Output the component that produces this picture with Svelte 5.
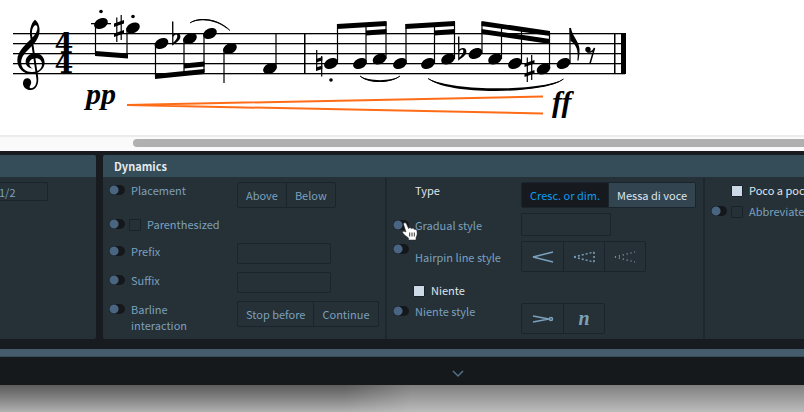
<script>
  const staffLines = [33, 43, 53, 63, 73];

  // head centre x, y; stem x and the y where the stem ends
  const notes = [
    { x: 101, y: 23.5, stem: 95.5, end: 54 },
    { x: 133, y: 28, stem: 127, end: 57 },
    { x: 161.5, y: 43.5, stem: 155.5, end: 77 },
    { x: 190, y: 38.5, stem: 184, end: 74 },
    { x: 210, y: 33.5, stem: 204, end: 72 },
    { x: 230, y: 48.5, stem: 224, end: 83 },
    { x: 270, y: 68.5, stem: 276, end: 33 },
    { x: 331, y: 63.5, stem: 337.5, end: 24 },
    { x: 360, y: 63.5, stem: 366, end: 24 },
    { x: 379.5, y: 59, stem: 386, end: 22 },
    { x: 400, y: 63.5, stem: 406, end: 24 },
    { x: 428, y: 63.5, stem: 434.5, end: 24 },
    { x: 448, y: 59, stem: 454.5, end: 22 },
    { x: 475.5, y: 53.5, stem: 482, end: 22 },
    { x: 495, y: 59, stem: 501.5, end: 25 },
    { x: 515, y: 63.5, stem: 521.5, end: 28 },
    { x: 543.5, y: 69, stem: 549.5, end: 32 },
    { x: 563.5, y: 63.5, stem: 570, end: 28 }
  ];

  // x1, y1, x2, y2 of the upper edge
  const beams = [
    [95, 51, 128, 53.5],
    [155, 74, 204.5, 69],
    [184, 63.5, 204.5, 61.5],
    [337, 24, 386.5, 21],
    [366, 30.5, 386.5, 29],
    [405.5, 24, 455, 21],
    [434, 30.5, 455, 29],
    [481.5, 21, 550, 31],
    [481.5, 29, 550, 39]
  ];

  const dots = [[101, 11.5], [133, 16.5], [331, 80]];
  const sharps = [[114, 15], [524.5, 55]];
  const flats = [[172, 21.5], [458, 36.5]];

  let type = $state('Cresc. or dim.');
</script>

{#snippet toggle(label)}
  <input class="toggle" type="checkbox" role="switch" aria-label={label} />
{/snippet}

<main>
  <section class="score" aria-label="Score">
    <svg width="804" height="134" viewBox="0 0 804 134">
      {#each staffLines as y}
        <rect x="13" {y} width="612" height="1.3" />
      {/each}
      <g transform="scale(.3333)">
        <path d="M105 59C115 66 121 82 118 99C114 123 95 139 81 153C68 166 62 178 64 192C66 207 80 217 97 216C116 215 127 204 126 191C125 179 115 174 105 175C93 176 87 185 88 192C89 200 94 203 99 206C86 205 76 197 77 184C78 170 90 160 106 160C124 160 134 174 134 189C133 208 114 222 95 222C69 222 52 204 52 180C53 156 70 141 86 124C99 112 110 100 112 88C113 80 111 75 106 76C98 80 95 92 96 104L114 228C118 252 108 270 92 270C78 270 68 260 69 248C70 238 77 234 84 235C95 238 96 250 90 258C88 260 89 264 92 265C104 265 112 250 109 234L91 112C88 92 92 70 105 59Z" />
      </g>
      <text class="meter" x="64" y="53" text-anchor="middle">4</text>
      <text class="meter" x="64" y="73" text-anchor="middle">4</text>

      <rect x="91" y="23" width="20" height="1.3" />
      {#each notes as n}
        <ellipse cx={n.x} cy={n.y} rx="7.2" ry="5" transform="rotate(-26 {n.x} {n.y})" />
        <path class="stem" d="M{n.stem} {n.y}V{n.end}" />
      {/each}
      {#each beams as [x1, y1, x2, y2]}
        <path d="M{x1} {y1}L{x2} {y2}V{y2 + 4.9}L{x1} {y1 + 4.9}Z" />
      {/each}
      {#each dots as [cx, cy]}
        <circle {cx} {cy} r="1.8" />
      {/each}
      {#each sharps as [x, y]}
        <g transform="translate({x} {y})">
          <path class="stem" d="M2.8 2.5V27M7.2 0V25" />
          <path d="M0 8.5L10 5V8.5L0 12ZM0 18.5L10 15V18.5L0 22Z" />
        </g>
      {/each}
      {#each flats as [x, y]}
        <path transform="translate({x} {y})" fill-rule="evenodd" d="M0 0H1.400V13C4 10.500 8.400 11 8.400 15C8.400 19 4 21 .2 24.200ZM1.400 15.500V21C4 18.500 5.500 16.500 5.300 14.300C5 12 2 13.300 1.400 15.500Z" />
      {/each}
      <path class="stem" d="M316.700 50V70.500M321.700 56V76.500" />
      <path d="M316 59L322.300 57V60.500L316 62.500ZM316 67.500L322.300 65.500V69L316 71Z" />

      <path d="M190 23C196 17 217 16 230 31C217 19 199 18 190 23Z" />
      <path d="M360 76C367 84 391 84 400 76C392 81.500 368 81.500 360 76Z" />
      <path d="M428 78.500C447 96 548 94 563.500 79C544 91 455 92 428 78.500Z" />
      <path class="stroke" d="M190 23C197 17.500 217 17.500 230 30.500M360 76C368 83 392 83 400 76M428 78.500C450 94 546 93 563.500 79" />

      <rect x="304" y="33" width="1.500" height="41" />
      <path d="M569.500 28H571C572 36 579 41 579.500 49C579.600 54 579 57 578.500 60.500H577.300C579 51 576 44 570.500 41Z" />
      <circle cx="588" cy="49.500" r="2.700" />
      <path class="rest" d="M587 51.500C590 53 593 51.500 594.500 48L590 63.500" />
      <rect x="614" y="33" width="1.500" height="41" />
      <rect x="621" y="33" width="5" height="41" />

      <path class="hairpin" d="M543 96.500L127 105L543 113.500" />
      <text class="dynamic" x="86" y="104">pp</text>
      <text class="dynamic" x="552" y="112">ff</text>
    </svg>
  </section>

  <div class="scrollbar"><div class="thumb"></div></div>

  <div class="panels">
    <section class="panel side">
      <h2></h2>
      <div class="body"><input class="field value" aria-label="Value" value="1/2" /></div>
    </section>

    <section class="panel">
      <h2>Dynamics</h2>
      <div class="body columns">
        <div class="column first">
          <div class="row">
            {@render toggle('Set placement')}
            <span class="label">Placement</span>
            <div class="segments"><button>Above</button><button>Below</button></div>
          </div>
          <div class="row">
            {@render toggle('Set parenthesized')}
            <label class="check"><input type="checkbox" />Parenthesized</label>
          </div>
          <div class="row">
            {@render toggle('Set prefix')}
            <label class="label" for="prefix">Prefix</label>
            <input class="field" id="prefix" />
          </div>
          <div class="row">
            {@render toggle('Set suffix')}
            <label class="label" for="suffix">Suffix</label>
            <input class="field" id="suffix" />
          </div>
          <div class="row">
            {@render toggle('Set barline interaction')}
            <span class="label">Barline<br />interaction</span>
            <div class="segments"><button>Stop before</button><button>Continue</button></div>
          </div>
        </div>

        <div class="column second">
          <div class="row on">
            <span class="blank"></span>
            <span class="label">Type</span>
            <div class="segments">
              {#each ['Cresc. or dim.', 'Messa di voce'] as option}
                <button class:selected={type === option} onclick={() => (type = option)}>{option}</button>
              {/each}
            </div>
          </div>
          <div class="row centered">
            <span class="pointed">
              {@render toggle('Set gradual style')}
              <svg class="cursor" width="16" height="19" viewBox="0 0 16 19">
                <path d="M1.500 2C1.500 .5 3.800 .3 4.500 2L6.500 6.500C7.500 5.500 9 5.700 9.500 6.700C10.500 6 12 6.300 12.300 7.500C13.600 7 15 8 15 9.500C15.500 12 14.800 14 14 15.500V18H6.500V16C4.500 14.500 2.500 13 .8 11C0 9.500 1.500 8.500 4 10Z" />
                <path class="knuckles" d="M7.700 10.500V14.500M10 10.500V14.500M12.300 10.500V14.500" />
              </svg>
            </span>
            <label class="label" for="gradual">Gradual style</label>
            <input class="field" id="gradual" />
          </div>
          <div class="row hairpins">
            {@render toggle('Set hairpin line style')}
            <span class="label">Hairpin line style</span>
            <div class="segments icons">
              <button aria-label="Solid"><svg width="22" height="12"><path d="M21 1L1 6L21 11" /></svg></button>
              <button aria-label="Dashed"><svg width="22" height="12"><path stroke-dasharray="2 2" d="M1 6L21 1M1 6L21 11M21 1V11" /></svg></button>
              <button aria-label="Dotted"><svg width="22" height="12"><path stroke-dasharray="1 3" d="M1 6L21 1M1 6L21 11" /></svg></button>
            </div>
          </div>
          <div class="row on niente">
            <label class="check"><input type="checkbox" />Niente</label>
          </div>
          <div class="row">
            {@render toggle('Set niente style')}
            <span class="label">Niente style</span>
            <div class="segments icons">
              <button aria-label="Circle"><svg width="22" height="10"><path d="M1 2L17 5L1 8" /><circle cx="19" cy="5" r="1.500" /></svg></button>
              <button class="letter">n</button>
            </div>
          </div>
        </div>

        <div class="column third">
          <div class="row on">
            <span class="blank"></span>
            <label class="check"><input type="checkbox" />Poco a poco</label>
          </div>
          <div class="row">
            {@render toggle('Set abbreviate')}
            <label class="check"><input type="checkbox" />Abbreviate</label>
          </div>
        </div>
      </div>
    </section>
  </div>

  <div class="bar"></div>
  <footer>
    <button aria-label="Hide panel"><svg width="12" height="8"><path d="M1 1L6 6L11 1" /></svg></button>
  </footer>
  <div class="shadow"></div>
</main>

<style>
  :global(body) {
    overflow: hidden;
    background: #fff;
  }
  main {
    display: flex;
    flex-direction: column;
    min-height: 100vh;
    overflow: hidden;
    font: 11px/16px "Noto Sans CJK SC", "Noto Sans", sans-serif;
    color: #7ba1bd;
  }
  main * {
    box-sizing: border-box;
  }
  button,
  input {
    margin: 0;
    font: inherit;
    color: inherit;
  }
  .score {
    height: 135px;
    overflow: hidden;
    background: #fff;
  }
  .score svg {
    display: block;
  }
  .stem,
  .stroke,
  .rest,
  .hairpin {
    fill: none;
    stroke: #000;
    stroke-width: 1.2px;
  }
  .stroke {
    stroke-width: 1px;
  }
  .rest {
    stroke-width: 1.5px;
  }
  .hairpin {
    stroke: #ff6c17;
    stroke-width: 2px;
  }
  .meter {
    font: bold 27px "DejaVu Serif", serif;
  }
  .dynamic {
    font: italic bold 30px "Liberation Serif", serif;
  }
  .scrollbar {
    height: 16px;
    padding: 2px 0 0 133px;
    border-top: 2px solid #ececec;
    background: #fafafa;
  }
  .thumb {
    height: 8px;
    border-radius: 4px 0 0 4px;
    background: #b0b0b0;
  }
  .panels {
    display: grid;
    grid-template-columns: 96px 1fr;
    gap: 7px;
    padding: 4px 0 10px;
    background: #181c20;
  }
  .panel {
    min-width: 0;
    display: flex;
    flex-direction: column;
    overflow: hidden;
    border-radius: 2px 0 0 2px;
    background: #263037;
  }
  .side {
    border-radius: 0 2px 2px 0;
  }
  h2 {
    height: 22px;
    margin: 0;
    padding-left: 11px;
    background: #354c59;
    font-size: 11px;
    line-height: 22px;
    font-weight: bold;
    color: #e4e9ed;
  }
  .body {
    flex: 1;
    padding-top: 1px;
  }
  .columns {
    display: grid;
    grid-template-columns: 284px 318px 1fr;
  }
  .column {
    display: grid;
    align-content: start;
    min-width: 0;
    padding: 4px 0 0 6px;
    border-right: 2px solid #1d272e;
    white-space: nowrap;
  }
  .first {
    grid-template-rows: 34px 27px 29px 29px 38px;
  }
  .second {
    grid-template-rows: 31px 28px 36px 26px 35px;
  }
  .third {
    grid-template-rows: 21px 21px;
    border: 0;
  }
  .row {
    display: flex;
    align-items: start;
    gap: 6px;
  }
  .on {
    color: #dfe6ec;
  }
  .centered {
    align-items: center;
    height: 23px;
  }
  .label {
    flex: none;
    width: 100px;
  }
  .blank {
    width: 16px;
  }
  .toggle {
    flex: none;
    display: block;
    appearance: none;
    width: 16px;
    height: 10px;
    margin-top: 3px;
    border-radius: 5px;
    background: radial-gradient(circle at 5px 5px, #4a6581 4px, #14181b 5px);
  }
  .centered .toggle {
    margin-top: 0;
  }
  .hairpins .label {
    padding-top: 8px;
  }
  .niente {
    padding: 5px 0 0 20px;
  }
  .check {
    display: flex;
    gap: 6px;
  }
  .row:not(.niente) > .check {
    margin-left: -2px;
  }
  .check input {
    appearance: none;
    width: 12px;
    height: 12px;
    margin-top: 3px;
    border: 1px solid #19212a;
    border-radius: 1px;
  }
  .on .check input {
    background: #ccd9e6;
  }
  .field {
    width: 94px;
    height: 21px;
    padding: 0 4px;
    border: 1px solid #1a242d;
    border-radius: 1px;
    background: none;
  }
  .second .field {
    width: 90px;
    height: 23px;
  }
  .value {
    display: block;
    width: 60px;
    height: 19px;
    margin: 4px 0 0 -12px;
    padding-left: 10px;
  }
  .segments {
    display: flex;
    height: 26px;
    border: 1px solid #1a242d;
    border-radius: 2px;
  }
  .segments button {
    display: grid;
    place-items: center;
    padding: 0 8px 1px;
    border: 0;
    background: none;
  }
  .segments button + button {
    border-left: 1px solid #1a242d;
  }
  .on .segments button {
    background: #324450;
  }
  .on .segments .selected {
    background: #16191d;
    color: #0a9cf5;
  }
  .icons {
    height: 31px;
  }
  .icons button {
    width: 41px;
    padding: 0;
  }
  .icons svg,
  footer svg {
    fill: none;
    stroke: #7ba1bd;
    stroke-width: 1.5px;
  }
  .segments .letter {
    font: italic bold 20px "Liberation Serif", serif;
  }
  .pointed {
    position: relative;
  }
  .cursor {
    position: absolute;
    left: 9px;
    top: 2px;
    fill: #fff;
    stroke: #20282e;
    stroke-width: 0.5px;
  }
  .knuckles {
    stroke: #333;
    stroke-width: 1px;
  }
  .bar {
    height: 8px;
    border-bottom: 1px solid #364d5b;
    background: #445c6c;
  }
  footer {
    height: 28px;
    padding-left: 111px;
    background: #15191b;
    text-align: center;
  }
  footer button {
    padding: 13px 0 0;
    border: 0;
    background: none;
  }
  footer svg {
    display: block;
    stroke: #527087;
  }
  .shadow {
    flex: 1;
    min-height: 27px;
    background: linear-gradient(#7f7f7f, #bcbcbc);
  }
  .shadow::before {
    content: "";
    display: block;
    height: 27px;
    background: linear-gradient(90deg, #0004 43%, #0000 51%);
    mask-image: linear-gradient(#000, #0003);
  }
</style>
